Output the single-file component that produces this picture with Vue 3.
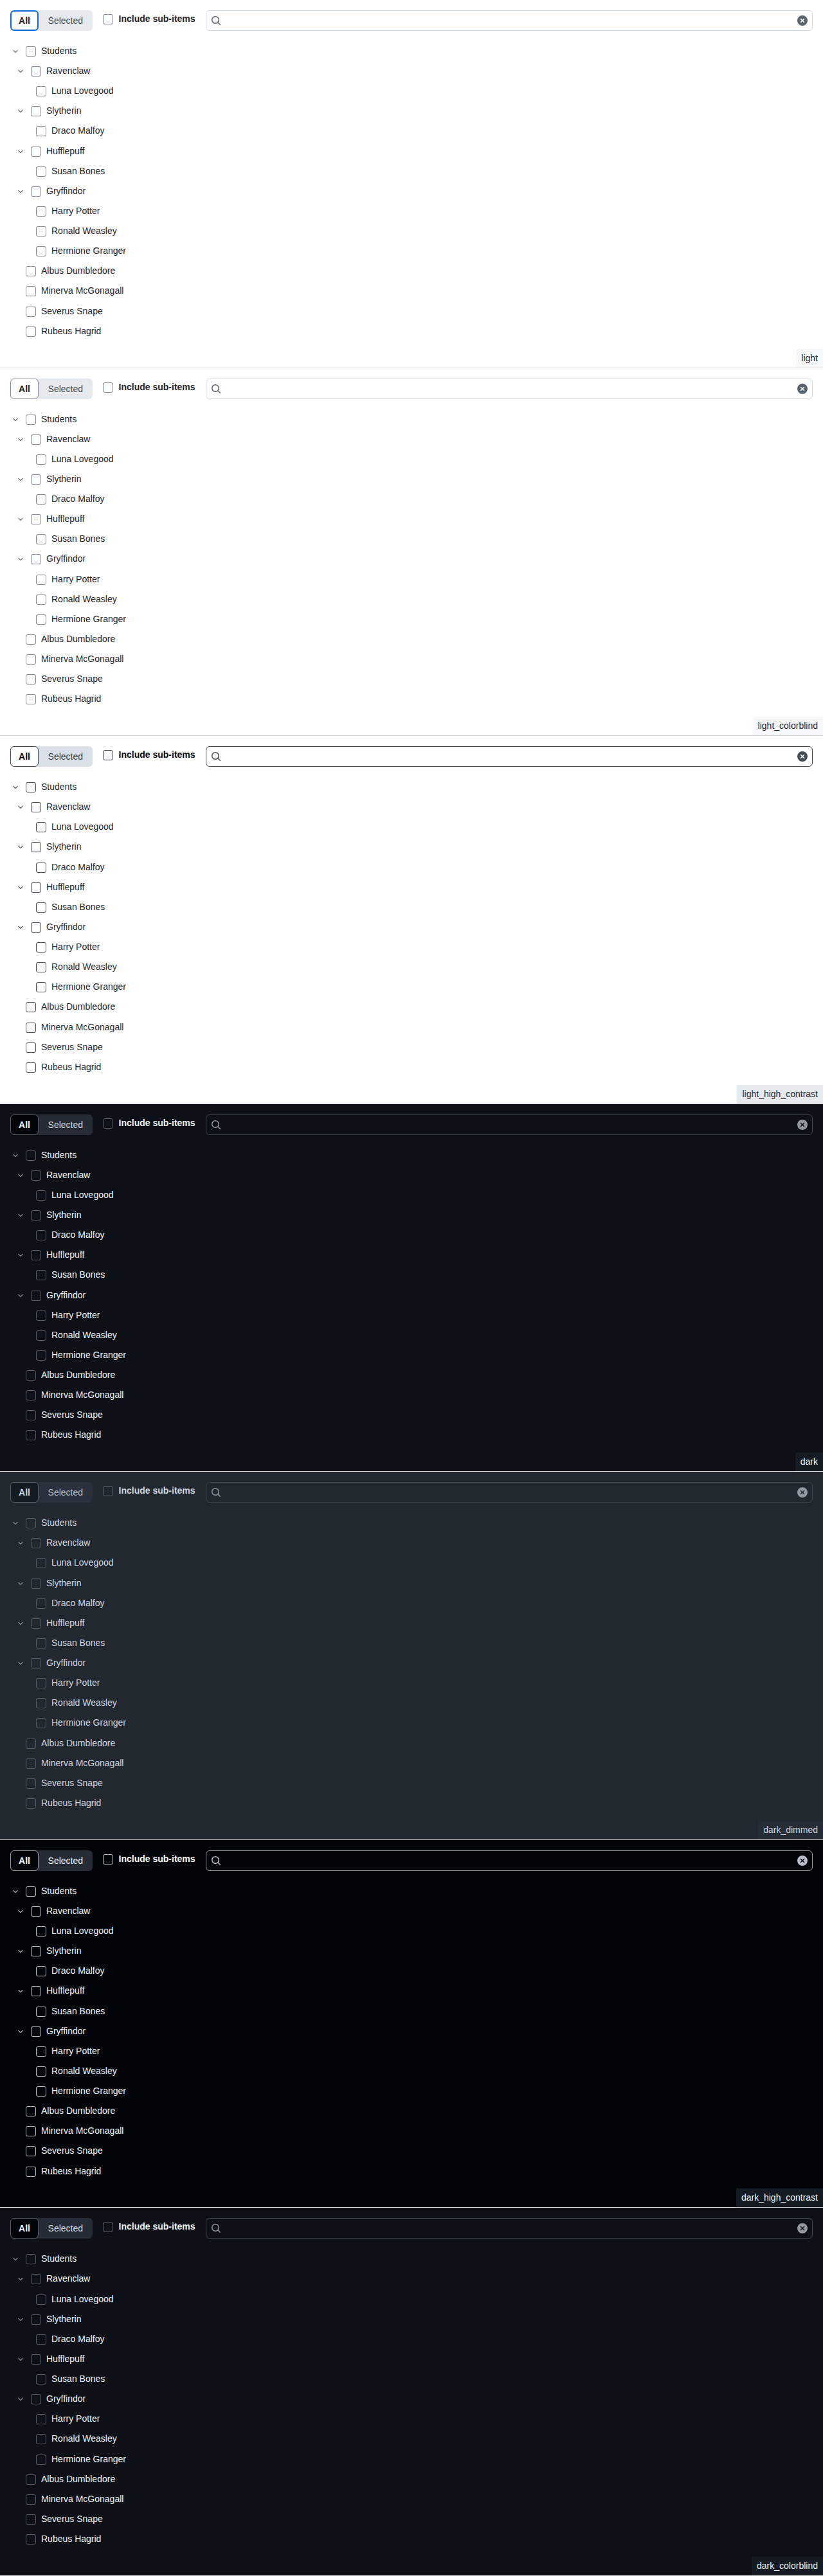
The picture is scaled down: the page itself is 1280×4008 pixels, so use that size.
<script setup>
const themes = [
  { name: "light", focus: true },
  { name: "light_colorblind" },
  { name: "light_high_contrast" },
  { name: "dark" },
  { name: "dark_dimmed" },
  { name: "dark_high_contrast" },
  { name: "dark_colorblind" },
]

const rows = [
  { label: "Students", pad: 16, open: true },
  { label: "Ravenclaw", pad: 24, open: true },
  { label: "Luna Lovegood", pad: 56 },
  { label: "Slytherin", pad: 24, open: true },
  { label: "Draco Malfoy", pad: 56 },
  { label: "Hufflepuff", pad: 24, open: true },
  { label: "Susan Bones", pad: 56 },
  { label: "Gryffindor", pad: 24, open: true },
  { label: "Harry Potter", pad: 56 },
  { label: "Ronald Weasley", pad: 56 },
  { label: "Hermione Granger", pad: 56 },
  { label: "Albus Dumbledore", pad: 40 },
  { label: "Minerva McGonagall", pad: 40 },
  { label: "Severus Snape", pad: 40 },
  { label: "Rubeus Hagrid", pad: 40 },
]
</script>

<template>
  <div class="page">
    <section v-for="t in themes" :key="t.name" class="story" :class="t.name">
      <div class="toolbar">
        <div class="segments">
          <button class="seg active" :class="{ focused: t.focus }">All</button>
          <button class="seg">Selected</button>
        </div>
        <label class="include">
          <span class="box"></span>
          <span class="include-text">Include sub-items</span>
        </label>
        <div class="search">
          <svg class="search-icon" viewBox="0 0 16 16" width="16" height="16">
            <path d="M10.68 11.74a6 6 0 0 1-7.922-8.982 6 6 0 0 1 8.982 7.922l3.04 3.04a.749.749 0 0 1-.326 1.275.749.749 0 0 1-.734-.215ZM11.5 7a4.499 4.499 0 1 0-8.997 0A4.499 4.499 0 0 0 11.5 7Z" />
          </svg>
          <svg class="clear-icon" viewBox="0 0 16 16" width="16" height="16">
            <path d="M2.343 13.657A8 8 0 1 1 13.658 2.343 8 8 0 0 1 2.343 13.657ZM6.03 4.97a.751.751 0 0 0-1.042.018.751.751 0 0 0-.018 1.042L6.94 8 4.97 9.97a.749.749 0 0 0 .326 1.275.749.749 0 0 0 .734-.215L8 9.06l1.97 1.97a.749.749 0 0 0 1.275-.326.749.749 0 0 0-.215-.734L9.06 8l1.97-1.97a.749.749 0 0 0-.326-1.275.749.749 0 0 0-.734.215L8 6.94Z" />
          </svg>
        </div>
      </div>
      <ul class="tree">
        <li v-for="r in rows" :key="r.label" class="row" :style="{ paddingLeft: r.pad + 'px' }">
          <span v-if="r.open" class="chevron-slot">
            <svg viewBox="0 0 16 16" width="12" height="12">
              <path d="M12.78 5.22a.749.749 0 0 1 0 1.06l-4.25 4.25a.749.749 0 0 1-1.06 0L3.22 6.28a.749.749 0 1 1 1.06-1.06L8 8.939l3.72-3.719a.749.749 0 0 1 1.06 0Z" />
            </svg>
          </span>
          <span class="box"></span>
          <span class="row-text">{{ r.label }}</span>
        </li>
      </ul>
      <div class="theme-tag">{{ t.name }}</div>
    </section>
  </div>
</template>

<style scoped>
.page {
  font-family: "Liberation Sans", Arial, sans-serif;
  font-size: 14px;
}
.story {
  position: relative;
  box-sizing: border-box;
  height: 572.571px;
  padding: 16px 16px 0;
  background: var(--bg);
  color: var(--fg);
  border-bottom: 1px solid #d4d4d4;
}
.light, .light_colorblind {
  --bg: #ffffff;
  --fg: #1f2328;
  --strong: #1f2328;
  --muted: #59636e;
  --seg-bg: #e6eaef;
  --seg-fg: #454c54;
  --active-bg: #ffffff;
  --active-border: #818b98;
  --box: #818b98;
  --input: #d1d9e0;
  --tag: #f6f8fa;
}
.light_high_contrast {
  --bg: #ffffff;
  --fg: #25292e;
  --strong: #010409;
  --muted: #454c54;
  --seg-bg: #dae0e7;
  --seg-fg: #393f46;
  --active-bg: #ffffff;
  --active-border: #454c54;
  --box: #454c54;
  --input: #454c54;
  --tag: #e6eaef;
}
.dark, .dark_colorblind {
  --bg: #0d1117;
  --fg: #f0f6fc;
  --strong: #f0f6fc;
  --muted: #9198a1;
  --seg-bg: #262c36;
  --seg-fg: #d1d7e0;
  --active-bg: #010409;
  --active-border: #555c65;
  --box: #555c65;
  --input: #3d444d;
  --tag: #151b23;
}
.dark_dimmed {
  --bg: #212830;
  --fg: #d1d7e0;
  --strong: #d1d7e0;
  --muted: #9198a1;
  --seg-bg: #2a313c;
  --seg-fg: #b7bdc8;
  --active-bg: #151b23;
  --active-border: #555c65;
  --box: #555c65;
  --input: #3d444d;
  --tag: #262c36;
}
.dark_high_contrast {
  --bg: #010409;
  --fg: #f0f6fc;
  --strong: #ffffff;
  --muted: #b7bdc8;
  --seg-bg: #262c36;
  --seg-fg: #f0f6fc;
  --active-bg: #010409;
  --active-border: #9198a1;
  --box: #b7bdc8;
  --input: #9198a1;
  --tag: #151b23;
}
.toolbar {
  display: flex;
  align-items: flex-start;
  gap: 16px;
  height: 32px;
}
.segments {
  display: flex;
  height: 32px;
  background: var(--seg-bg);
  border-radius: 6px;
}
.seg {
  box-sizing: border-box;
  height: 32px;
  padding: 0 14.5px;
  border: 0;
  background: none;
  border-radius: 6px;
  font: inherit;
  color: var(--seg-fg);
}
.seg.active {
  padding: 0 12.1px;
  background: var(--active-bg);
  border: 1px solid var(--active-border);
  color: var(--strong);
  font-weight: 700;
}
.seg.focused {
  border: 2px solid #0969da;
  padding: 0 11.1px;
}
.include {
  display: flex;
  align-items: flex-start;
  gap: 9px;
  padding-top: 3px;
}
.include .box {
  margin-top: 3px;
}
.include-text {
  font-weight: 700;
  line-height: 20px;
  color: var(--strong);
}
.box {
  box-sizing: border-box;
  flex: none;
  width: 16px;
  height: 16px;
  border: 1px solid var(--box);
  border-radius: 3px;
}
.search {
  box-sizing: border-box;
  flex: 1;
  display: flex;
  align-items: center;
  justify-content: space-between;
  height: 32px;
  padding: 0 7px;
  border: 1px solid var(--input);
  border-radius: 6px;
}
.search-icon {
  fill: var(--muted);
}
.clear-icon {
  fill: var(--muted);
}
.tree {
  list-style: none;
  margin: 16.4px 0 0 -16px;
  padding: 0;
}
.row {
  display: flex;
  align-items: center;
  height: 31.14px;
}
.chevron-slot {
  display: flex;
  justify-content: center;
  align-items: center;
  width: 16px;
  margin-right: 8px;
}
.chevron-slot svg {
  fill: var(--muted);
}
.row-text {
  margin-left: 8px;
  line-height: 20px;
  position: relative;
  top: -1px;
}
.theme-tag {
  position: absolute;
  right: 0;
  bottom: 0;
  padding: 4px 8px;
  line-height: 21px;
  background: var(--tag);
  color: var(--fg);
}
</style>
